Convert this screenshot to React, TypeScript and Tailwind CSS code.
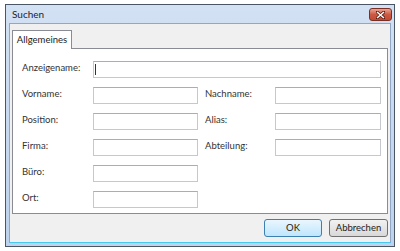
import React from "react";

const font = { fontFamily: "Lato, 'Noto Sans', sans-serif" };

function Feld() {
  return <div className="h-[17px] border border-[#c5c8ce] border-t-[#abadb3] bg-white" />;
}

function Label({ children }: { children: React.ReactNode }) {
  return <div className="text-[9.5px] leading-[13px] text-[#333]">{children}</div>;
}

export default function App() {
  return (
    <div className="w-[400px] h-[251px] bg-white pl-[5px] pt-[4px]" style={font}>
      <div className="w-[390px] h-[243px] border border-[#4a5566] bg-gradient-to-b from-[#d2e1f3] to-[#bdd2ec] flex flex-col">
        {/* Titelleiste */}
        <div className="h-[18px] flex items-start justify-between pl-[6px] pr-[2px]">
          <span className="mt-[3px] text-[10px] leading-[13px] text-[#1e1e1e]">Suchen</span>
          <div className="mt-[3px] w-[23px] h-[13px] rounded-[3px] border border-[#7a2f25] bg-gradient-to-b from-[#e9a594] via-[#cc5a43] to-[#c44a32] flex items-center justify-center">
            <svg width="9" height="8" viewBox="0 0 9 8">
              <path d="M1 1 L8 7 M8 1 L1 7" stroke="#5a1a10" strokeWidth="3" strokeLinecap="square" />
              <path d="M1 1 L8 7 M8 1 L1 7" stroke="#fff" strokeWidth="1.6" />
            </svg>
          </div>
        </div>

        {/* Inhalt */}
        <div className="flex-1 mx-[3px] mb-[3px] border border-[#91a7c4] border-b-[#46c8f0] bg-[#f0f0f0] flex flex-col px-[2px] pt-[5px]">
          <div className="flex">
            <div className="h-[19px] w-[60px] text-center border border-b-0 border-[#898c95] bg-white text-[9.5px] leading-[17px] text-[#222] relative top-[1px]">
              Allgemeines
            </div>
          </div>
          <div className="h-[166px] border border-[#898c95] bg-white pt-[12px] pl-[9px] pr-[3px]">
            <div className="grid grid-cols-[71px_105px_7px_70px_106px] gap-y-[9px]">
              <Label>Anzeigename:</Label>
              <div className="col-span-4 h-[17px] border border-[#c5c8ce] border-t-[#abadb3] bg-white flex items-center pl-[1px]">
                <div className="w-[1px] h-[11px] bg-[#333]" />
              </div>

              <Label>Vorname:</Label>
              <Feld />
              <div />
              <Label>Nachname:</Label>
              <Feld />

              <Label>Position:</Label>
              <Feld />
              <div />
              <Label>Alias:</Label>
              <Feld />

              <Label>Firma:</Label>
              <Feld />
              <div />
              <Label>Abteilung:</Label>
              <Feld />

              <Label>Büro:</Label>
              <Feld />
              <div className="col-span-3" />

              <Label>Ort:</Label>
              <Feld />
              <div className="col-span-3" />
            </div>
          </div>
          <div className="flex justify-end gap-[7px] mt-[5px]">
            <button className="w-[58px] h-[18px] rounded-[3px] border border-[#3c7fb1] bg-gradient-to-b from-[#eaf6fd] to-[#bee6fd] text-[9.5px] text-[#222] leading-[16px]">
              OK
            </button>
            <button className="w-[59px] h-[18px] rounded-[3px] border border-[#707070] bg-gradient-to-b from-[#f2f2f2] to-[#d8d8d8] text-[9.5px] text-[#222] leading-[16px]">
              Abbrechen
            </button>
          </div>
        </div>
      </div>
    </div>
  );
}
